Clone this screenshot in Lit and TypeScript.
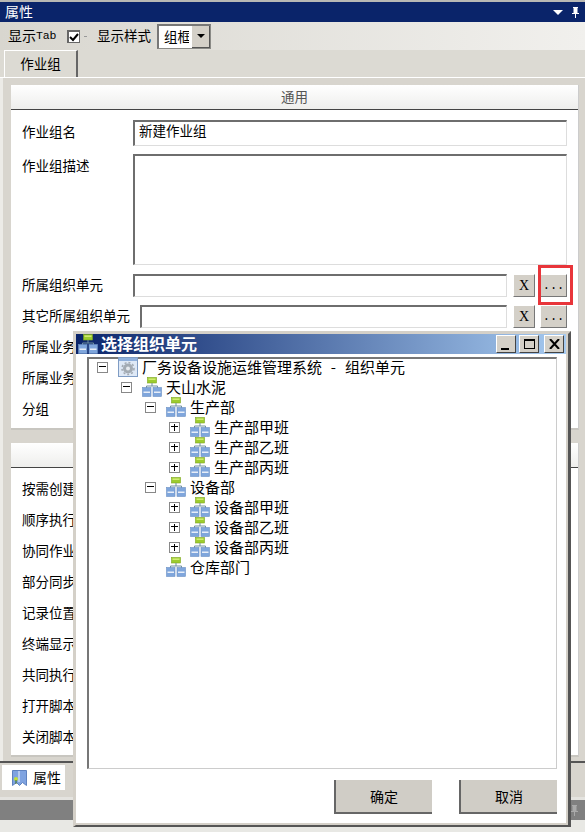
import { LitElement, html, css, svg } from "lit";
import { customElement } from "lit/decorators.js";

type Node = { label: string; depth: number; exp: "" | "+" | "-"; root?: boolean };

const TREE: Node[] = [
  { label: "厂务设备设施运维管理系统 - 组织单元", depth: 0, exp: "-", root: true },
  { label: "天山水泥", depth: 1, exp: "-" },
  { label: "生产部", depth: 2, exp: "-" },
  { label: "生产部甲班", depth: 3, exp: "+" },
  { label: "生产部乙班", depth: 3, exp: "+" },
  { label: "生产部丙班", depth: 3, exp: "+" },
  { label: "设备部", depth: 2, exp: "-" },
  { label: "设备部甲班", depth: 3, exp: "+" },
  { label: "设备部乙班", depth: 3, exp: "+" },
  { label: "设备部丙班", depth: 3, exp: "+" },
  { label: "仓库部门", depth: 2, exp: "" },
];

const LOWER = ["按需创建", "顺序执行", "协同作业", "部分同步", "记录位置", "终端显示", "共同执行", "打开脚本", "关闭脚本"];

const orgIcon = (w = 20, h = 20) => svg`<svg width=${w} height=${h} viewBox="0 0 20 20">
  <rect x="5.500" y=".5" width="9" height="5.500" fill="#9ccc2e" stroke="#7da51e" stroke-width=".6"/>
  <rect x="6.500" y="1.500" width="7" height="1.400" fill="#d6ef7a"/>
  <path d="M10 6v3M4.500 11V9h11v2" fill="none" stroke="#6f8f9f" stroke-width="1"/>
  <rect x=".5" y="10.500" width="8.500" height="9" fill="#7fa6dc" stroke="#6b8fc4" stroke-width=".6"/>
  <rect x="11" y="10.500" width="8.500" height="9" fill="#7fa6dc" stroke="#6b8fc4" stroke-width=".6"/>
  <rect x="1.500" y="14.500" width="6.500" height="1.500" fill="#e8eef8"/>
  <rect x="12" y="14.500" width="6.500" height="1.500" fill="#e8eef8"/>
</svg>`;

const rootIcon = svg`<svg width="20" height="20" viewBox="0 0 20 20">
  <rect x=".5" y=".5" width="19" height="19" fill="#dfe9f6" stroke="#7f9cc4"/>
  <rect x="1" y="1" width="18" height="3" fill="#8fb0dc"/>
  <circle cx="10" cy="11.500" r="5" fill="#a3abb3"/>
  <circle cx="10" cy="11.500" r="6" fill="none" stroke="#a3abb3" stroke-width="1.600" stroke-dasharray="2 2"/>
  <circle cx="10" cy="11.500" r="2" fill="#e6eaee"/>
</svg>`;

const propIcon = svg`<svg width="15" height="16" viewBox="0 0 15 16">
  <path d="M.5.500h14v15l-4-3-3 3-3-3-4 3z" fill="#7fa3e0" stroke="#5f82bf"/>
  <path d="M7 1v11" stroke="#c8d8f4" stroke-width="1.500"/>
  <circle cx="4" cy="9" r="2" fill="#c3e03a"/>
  <path d="M4 10v4" stroke="#3a6a20"/>
</svg>`;

const pin = (c: string) => svg`<svg width="9" height="11" viewBox="0 0 9 11">
  <path d="M2 0h5v1H6.500v5H8v1H5v4H4V7H1V6h1.500V1H2z" fill=${c}/>
</svg>`;

@customElement("app-root")
export class AppRoot extends LitElement {
  static styles = css`
    :host {
      display: flex;
      flex-direction: column;
      position: relative;
      width: 585px;
      height: 832px;
      overflow: hidden;
      background: #d8d5ce;
      font-family: "Noto Sans CJK SC", "Liberation Sans", sans-serif;
      font-size: 13.5px;
      color: #000;
    }
    .topline { height: 2px; background: #b8b8b4; flex: none; }
    .title {
      height: 20px; flex: none; background: #0a246a; color: #fff;
      display: flex; align-items: center; padding: 0 5px; font-size: 14px; gap: 8px;
    }
    .title span { flex: 1; padding-bottom: 2px; }
    .tri { width: 0; height: 0; border: 5px solid transparent; border-top: 5px solid #fff; border-bottom: 0; }
    .toolbar {
      height: 28px; flex: none; box-sizing: border-box; display: flex; align-items: center;
      padding-left: 8px; background: linear-gradient(90deg, #d8d6cf, #f1f0ed);
    }
    .toolbar > span { padding-bottom: 2px; }
    .mono { font-family: "Liberation Mono", monospace; font-size: 11.5px; letter-spacing: -.2px; }
    .show { font-size: 14px; }
    .check {
      width: 13px; height: 13px; margin: 0 4px 0 11px; box-sizing: border-box; background: #fff;
      border: 1px solid #666; border-top-width: 2px; border-left-width: 2px; display: flex;
    }
    .dash { width: 3px; height: 1px; background: #999; margin: 0 10px 0 0; }
    .combo {
      display: flex; margin-left: 6px; width: 54px; height: 25px; box-sizing: border-box; background: #fff;
      border: 1px solid #8a8a86; border-top: 2px solid #777; border-left: 2px solid #777;
    }
    .combo span { width: 25px; margin-left: 5px; overflow: hidden; white-space: nowrap; line-height: 20px; font-size: 13.5px; }
    .combo b {
      margin-left: auto; width: 17px; background: #d4d0c8; display: flex; align-items: center; justify-content: center;
      border-right: 1px solid #555; border-bottom: 1px solid #555;
    }
    .combo i { width: 0; height: 0; border: 4px solid transparent; border-top: 4px solid #000; border-bottom: 0; }
    .tabs { height: 28px; flex: none; box-sizing: border-box; padding-left: 4px; border-bottom: 1px solid #fff; background: #dcdad3; display: flex; align-items: flex-end; }
    .tab {
      width: 74px; height: 27px; box-sizing: border-box; background: #dcdad3; text-align: center;
      border-top: 1px solid #fff; border-left: 1px solid #fff; border-right: 2px solid #666; line-height: 25px;
    }
    .content {
      flex: none; height: 683px; box-sizing: border-box; padding: 7px 6px 4px 8px;
      display: flex; flex-direction: column; gap: 13px; background: #d8d5ce;
      border-left: 3px solid #ecebe7;
    }
    .group { background: #fff; display: flex; flex-direction: column; border-right: 1px solid #ccc; border-bottom: 2px solid #c8c6c0; }
    .g1 { height: 345px; flex: none; box-sizing: border-box; }
    .g2 { height: 314px; flex: none; box-sizing: border-box; }
    .ghead {
      height: 25px; flex: none; box-sizing: border-box; border-bottom: 1px solid #444;
      background: linear-gradient(#fff, #eeeeec); text-align: center; color: #555; line-height: 23px;
    }
    .fields { display: flex; flex-direction: column; padding: 10px 11px 0 11px; gap: 8px; }
    .row { display: flex; align-items: center; height: 23px; }
    .row.tall { height: 26px; }
    .row.area { height: 111px; align-items: flex-start; margin-bottom: 1px; }
    .row.area label { margin-top: 1px; }
    label { width: 111px; flex: none; white-space: nowrap; padding-bottom: 4px; }
    .row.tall label { padding-bottom: 5px; }
    label.wide { width: 118px; }
    .input {
      flex: 1; align-self: stretch; box-sizing: border-box; background: #fff; padding-left: 4px; line-height: 16px;
      border-top: 2px solid #6e6e6e; border-left: 2px solid #6e6e6e; border-right: 1px solid #ddd; border-bottom: 1px solid #ddd;
    }
    .btn {
      flex: none; align-self: stretch; box-sizing: border-box; background: #d4d0c8; display: flex; align-items: center; justify-content: center;
      font-family: "Liberation Serif", serif; border-left: 1px solid #fff; border-top: 1px solid #fff; border-right: 1px solid #777; border-bottom: 1px solid #777;
    }
    .x { width: 22px; margin-left: 6px; font-size: 14px; }
    .dots { width: 27px; margin-left: 5px; position: relative; font-family: "Liberation Mono", monospace; font-size: 12px; }
    .red { position: absolute; left: -3px; top: -10px; width: 29px; height: 34px; border: 3px solid #e8353a; pointer-events: none; }
    .lower { display: flex; flex-direction: column; padding: 5px 0 0 11px; }
    .lower div { height: 31px; line-height: 31px; white-space: nowrap; }
    .bottomtabs {
      height: 36px; flex: none; box-sizing: border-box; border-top: 2px solid #555; background: #d8d5ce; padding: 2px 0 0 2px; display: flex;
    }
    .bt { width: 63px; height: 25px; background: #fff; display: flex; align-items: center; gap: 6px; padding-left: 10px; box-sizing: border-box; font-size: 14px; }
    .bt span { padding-bottom: 2px; }
    .gap3 { height: 3px; flex: none; background: #e4e3df; }
    .graybar { height: 20px; flex: none; background: #808080; display: flex; align-items: center; justify-content: flex-end; padding-right: 6px; }
    .foot { height: 12px; flex: none; background: #e8e8e4; }

    .dialog {
      position: absolute; left: 73px; top: 331px; width: 498px; height: 496px; box-sizing: border-box; background: #fff;
      border-top: 3px solid #d4d0c8; border-left: 3px solid #d4d0c8; border-right: 3px solid #555; border-bottom: 2px solid #555;
      display: flex; flex-direction: column; box-shadow: inset -2px -2px 0 #d4d0c8;
    }
    .dtitle {
      height: 20px; flex: none; margin-right: 2px; display: flex; align-items: center; color: #fff; font-weight: 700; font-size: 16px;
      background: linear-gradient(90deg, #0a246a, #a6caf0); padding-left: 2px; gap: 3px;
    }
    .dtitle span { flex: 1; white-space: nowrap; padding-bottom: 3px; }
    .wbtn {
      width: 20px; height: 18px; box-sizing: border-box; background: #d4d0c8; display: flex; align-items: center; justify-content: center;
      border-left: 1px solid #fff; border-top: 1px solid #fff; border-right: 1px solid #444; border-bottom: 1px solid #444;
    }
    .wbtn.close { margin: 0 2px 0 2px; }
    .min { width: 8px; height: 2px; background: #000; margin-top: 9px; margin-right: 2px; }
    .max { width: 11px; height: 10px; box-sizing: border-box; border: 1px solid #000; border-top-width: 2px; }
    .tree {
      flex: none; height: 412px; margin: 3px 11px 0 11px; box-sizing: border-box; padding: 0 0 0 8px;
      border-top: 2px solid #777; border-left: 2px solid #777; border-right: 1px solid #ccc; border-bottom: 1px solid #ccc;
    }
    .nodes { margin-top: -2px; }
    .node { height: 20px; display: flex; align-items: center; font-size: 15px; white-space: pre; word-spacing: 5.500px; }
    .node span:last-child { padding-bottom: 1px; }
    .box {
      width: 11px; height: 11px; box-sizing: border-box; border: 1px solid #888; background: #fff; flex: none; position: relative; margin-right: 10px;
    }
    .box.none { border: 0; background: none; }
    .box i { position: absolute; left: 1px; top: 3.500px; width: 7px; height: 1px; background: #000; }
    .box u { position: absolute; left: 4px; top: 1px; width: 1px; height: 7px; background: #000; }
    .node svg { flex: none; margin-right: 4px; }
    .actions { display: flex; justify-content: flex-end; gap: 27px; padding: 11px 11px 0 0; }
    .act {
      width: 98px; height: 34px; box-sizing: border-box; background: #d0cdc6; text-align: center; line-height: 32px; font-size: 14px;
      border-left: 2px solid #666; border-bottom: 2px solid #666;
    }
  `;

  private node(n: Node) {
    return html`<div class="node" style="padding-left:${n.depth * 24}px">
      <span class="box ${n.exp ? "" : "none"}">${n.exp ? html`<i></i>` : ""}${n.exp === "+" ? html`<u></u>` : ""}</span>
      ${n.root ? rootIcon : orgIcon()}<span>${n.label}</span>
    </div>`;
  }

  render() {
    return html`
      <div class="topline"></div>
      <div class="title"><span>属性</span><div class="tri"></div>${pin("#fff")}</div>
      <div class="toolbar">
        <span class="show">显示</span><span class="mono">Tab</span>
        <div class="check"><svg width="10" height="10" viewBox="0 0 10 10"><path d="M1 5l3 3 5-6" fill="none" stroke="#000" stroke-width="2"/></svg></div>
        <div class="dash"></div>
        <span>显示样式</span>
        <div class="combo"><span>组框</span><b><i></i></b></div>
      </div>
      <div class="tabs"><div class="tab">作业组</div></div>
      <div class="content">
        <div class="group g1">
          <div class="ghead">通用</div>
          <div class="fields">
            <div class="row tall"><label>作业组名</label><div class="input">新建作业组</div></div>
            <div class="row area"><label>作业组描述</label><div class="input"></div></div>
            <div class="row"><label>所属组织单元</label><div class="input"></div><div class="btn x">X</div><div class="btn dots">...<div class="red"></div></div></div>
            <div class="row"><label class="wide">其它所属组织单元</label><div class="input"></div><div class="btn x">X</div><div class="btn dots">...</div></div>
            <div class="row"><label>所属业务</label></div>
            <div class="row"><label>所属业务</label></div>
            <div class="row"><label>分组</label></div>
          </div>
        </div>
        <div class="group g2">
          <div class="ghead"></div>
          <div class="lower">${LOWER.map((t) => html`<div>${t}</div>`)}</div>
        </div>
      </div>
      <div class="bottomtabs"><div class="bt">${propIcon}<span>属性</span></div></div>
      <div class="gap3"></div>
      <div class="graybar">${pin("#aaa")}</div>
      <div class="foot"></div>

      <div class="dialog">
        <div class="dtitle">
          ${orgIcon(20, 20)}<span>选择组织单元</span>
          <div class="wbtn"><div class="min"></div></div>
          <div class="wbtn"><div class="max"></div></div>
          <div class="wbtn close"><svg width="11" height="10" viewBox="0 0 11 10"><path d="M1 0l9 10M10 0l-9 10" stroke="#000" stroke-width="2"/></svg></div>
        </div>
        <div class="tree"><div class="nodes">${TREE.map((n) => this.node(n))}</div></div>
        <div class="actions"><div class="act">确定</div><div class="act">取消</div></div>
      </div>
    `;
  }
}
